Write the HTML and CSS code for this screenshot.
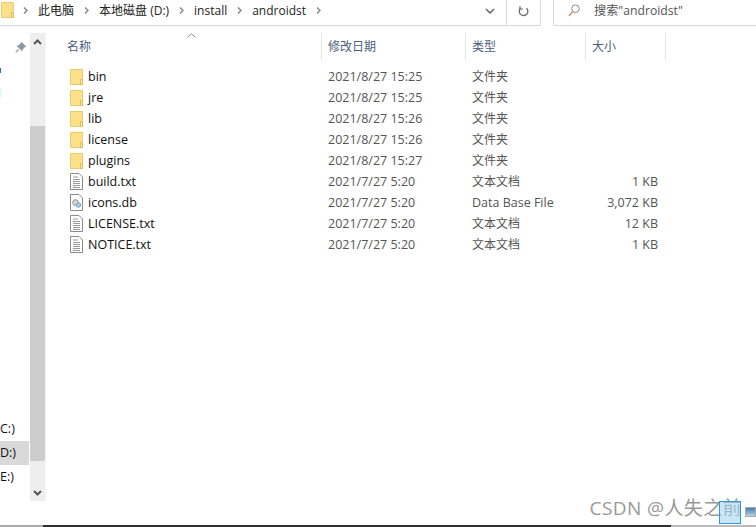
FILE: index.html
```html
<!DOCTYPE html>
<html lang="zh">
<head>
<meta charset="utf-8">
<title>androidst</title>
<link rel="stylesheet" href="styles.css">
</head>
<body>
<svg class="defs" width="0" height="0" aria-hidden="true">
  <symbol id="folder" viewBox="0 0 13 16">
    <path d="M.5.5H12.500V15.500H.5Z" fill="#fde08a" stroke="#eccb6a"/>
    <path d="M10.500 10.500H12.500V15.500H10.500Z" fill="#fdeeb5" stroke="#e3bb52"/>
  </symbol>
  <symbol id="txt" viewBox="0 0 13 17">
    <path d="M.5.5H9L12.500 4V16.500H.5Z" fill="#fff" stroke="#8a8a8a"/>
    <path d="M3 4H8M3 6.500H10M3 8.500H10M3 10.500H10M3 12.500H10M3 14.500H10" stroke="#9a9a9a"/>
  </symbol>
  <symbol id="db" viewBox="0 0 13 17">
    <path d="M.5.5H9L12.500 4V16.500H.5Z" fill="#fff" stroke="#8a8a8a"/>
    <circle cx="5.500" cy="8.500" r="2.800" fill="#d8d8d8" stroke="#8f8f8f"/>
    <circle cx="8.500" cy="11" r="2.200" fill="#a9cfe8" stroke="#7ba6c4"/>
  </symbol>
</svg>

<header class="topbar">
  <div class="address">
    <svg class="crumb-folder" width="13" height="16"><use href="#folder"/></svg>
    <span class="sep first"><svg width="5" height="7" viewBox="0 0 5 7"><path d="M1 .5L4 3.500L1 6.500" fill="none" stroke="#8a8a8a" stroke-width="1.500"/></svg></span>
    <span class="crumb">此电脑</span>
    <span class="sep"><svg width="5" height="7" viewBox="0 0 5 7"><path d="M1 .5L4 3.500L1 6.500" fill="none" stroke="#8a8a8a" stroke-width="1.500"/></svg></span>
    <span class="crumb">本地磁盘 (D:)</span>
    <span class="sep"><svg width="5" height="7" viewBox="0 0 5 7"><path d="M1 .5L4 3.500L1 6.500" fill="none" stroke="#8a8a8a" stroke-width="1.500"/></svg></span>
    <span class="crumb">install</span>
    <span class="sep"><svg width="5" height="7" viewBox="0 0 5 7"><path d="M1 .5L4 3.500L1 6.500" fill="none" stroke="#8a8a8a" stroke-width="1.500"/></svg></span>
    <span class="crumb">androidst</span>
    <span class="sep"><svg width="5" height="7" viewBox="0 0 5 7"><path d="M1 .5L4 3.500L1 6.500" fill="none" stroke="#8a8a8a" stroke-width="1.500"/></svg></span>
    <span class="drop"><svg width="10" height="6" viewBox="0 0 10 6"><path d="M1 1L5 5L9 1" fill="none" stroke="#666" stroke-width="1.500"/></svg></span>
    <span class="refresh"><svg width="11" height="12" viewBox="0 0 11 12"><path d="M8.500 3.200A4.300 4.300 0 1 1 2.500 3.300" fill="none" stroke="#6d6d6d" stroke-width="1.300"/><path d="M2 1V4H5" fill="none" stroke="#6d6d6d" stroke-width="1.200"/></svg></span>
  </div>
  <div class="search">
    <svg width="12" height="13" viewBox="0 0 12 13"><circle cx="7.500" cy="4.700" r="3.800" fill="none" stroke="#8a8a8a"/><path d="M4.700 7.500L1 12" stroke="#c08a60" stroke-width="1.200"/></svg>
    <span>搜索"androidst"</span>
  </div>
</header>

<main class="body">
  <aside class="nav">
    <div class="nav-list">
      <div class="pin"><svg width="12" height="12" viewBox="0 0 12 12"><path d="M6.500.8L11.200 5.500L9.800 6.200L7.500 8.800L7.200 10.500L1.500 4.800L3.300 4.500L5.800 2.200Z" fill="#8d99a6"/><path d="M3.500 8.500L.8 11.200" stroke="#8d99a6" stroke-width="1.200"/></svg></div>
      <div class="marks"><i class="mark-a"></i><i class="mark-b"></i></div>
      <div class="drives">
        <div class="drive">C:)</div>
        <div class="drive active">D:)</div>
        <div class="drive">E:)</div>
      </div>
    </div>
    <div class="scroll">
      <div class="arrow"><svg width="9" height="6" viewBox="0 0 9 6"><path d="M1 5L4.500 1.500L8 5" fill="none" stroke="#555" stroke-width="2"/></svg></div>
      <div class="track"><div class="thumb"></div></div>
      <div class="arrow"><svg width="9" height="6" viewBox="0 0 9 6"><path d="M1 1L4.500 4.500L8 1" fill="none" stroke="#555" stroke-width="2"/></svg></div>
    </div>
  </aside>

  <section class="files">
    <div class="head">
      <div class="col col-name">名称<svg class="sort" width="9" height="5" viewBox="0 0 9 5"><path d="M.5 4.500L4.500 .8L8.500 4.500" fill="none" stroke="#8a8a8a"/></svg></div>
      <div class="col col-date">修改日期</div>
      <div class="col col-type">类型</div>
      <div class="col col-size">大小</div>
    </div>
    <div class="rows">
      <div class="row"><div class="name"><svg width="13" height="16"><use href="#folder"/></svg>bin</div><div class="date">2021/8/27 15:25</div><div class="type">文件夹</div><div class="size"></div></div>
      <div class="row"><div class="name"><svg width="13" height="16"><use href="#folder"/></svg>jre</div><div class="date">2021/8/27 15:25</div><div class="type">文件夹</div><div class="size"></div></div>
      <div class="row"><div class="name"><svg width="13" height="16"><use href="#folder"/></svg>lib</div><div class="date">2021/8/27 15:26</div><div class="type">文件夹</div><div class="size"></div></div>
      <div class="row"><div class="name"><svg width="13" height="16"><use href="#folder"/></svg>license</div><div class="date">2021/8/27 15:26</div><div class="type">文件夹</div><div class="size"></div></div>
      <div class="row"><div class="name"><svg width="13" height="16"><use href="#folder"/></svg>plugins</div><div class="date">2021/8/27 15:27</div><div class="type">文件夹</div><div class="size"></div></div>
      <div class="row"><div class="name"><svg width="13" height="17"><use href="#txt"/></svg>build.txt</div><div class="date">2021/7/27 5:20</div><div class="type">文本文档</div><div class="size">1 KB</div></div>
      <div class="row"><div class="name"><svg width="13" height="17"><use href="#db"/></svg>icons.db</div><div class="date">2021/7/27 5:20</div><div class="type latin">Data Base File</div><div class="size">3,072 KB</div></div>
      <div class="row"><div class="name"><svg width="13" height="17"><use href="#txt"/></svg>LICENSE.txt</div><div class="date">2021/7/27 5:20</div><div class="type">文本文档</div><div class="size">12 KB</div></div>
      <div class="row"><div class="name"><svg width="13" height="17"><use href="#txt"/></svg>NOTICE.txt</div><div class="date">2021/7/27 5:20</div><div class="type">文本文档</div><div class="size">1 KB</div></div>
    </div>
  </section>
</main>

<div class="watermark">CSDN @人失之前</div>
<div class="tray-a"></div>
<div class="tray-b"></div>
<footer class="strip"><i class="s1"></i><i class="s2"></i><i class="s3"></i></footer>
</body>
</html>
```
FILE: styles.css
```css
* { box-sizing: border-box; }
html, body { margin: 0; height: 100%; }
body {
  width: 756px;
  height: 527px;
  overflow: hidden;
  position: relative;
  display: flex;
  flex-direction: column;
  background: #fff;
  font: 12px/21px "Open Sans", "Noto Sans CJK SC", sans-serif;
  color: #111;
}
.defs { position: absolute; }
svg { display: block; flex: none; }

.topbar { height: 26px; display: flex; flex: none; }
.address {
  width: 541px;
  display: flex;
  align-items: center;
  padding: 0 0 0 1px;
  border: solid #d9d9d9;
  border-width: 0 1px 1px 0;
  color: #222;
}
.crumb-folder { margin-bottom: 5px; }
.sep { width: 9px; margin: 0 8px 5px; display: flex; justify-content: center; }
.sep.first { margin: 0 8px 5px 7px; }
.crumb { white-space: nowrap; margin-bottom: 5px; }
.drop { margin: 0 6px 3px auto; width: 20px; display: flex; justify-content: center; }
.refresh { width: 34px; height: 25px; padding-bottom: 3px; border-left: 1px solid #d9d9d9; display: flex; align-items: center; justify-content: center; }
.search {
  margin-left: 12px;
  flex: 1;
  display: flex;
  align-items: center;
  gap: 14px;
  padding: 0 0 4px 14px;
  border: solid #d9d9d9;
  border-width: 0 0 1px 1px;
  font-size: 12.200px;
  color: #555;
}

.body { flex: 1; display: flex; min-height: 0; }
.nav { width: 47px; flex: none; display: flex; padding-top: 7px; height: 475px; }
.nav-list { width: 30px; display: flex; flex-direction: column; position: relative; }
.pin { padding: 8px 0 0 15px; height: 35px; }
.marks { height: 0; }
.mark-a { position: absolute; left: 0; top: 35px; width: 1px; height: 5px; background: #2a6fd0; }
.mark-b { position: absolute; left: 0; top: 55px; width: 1px; height: 10px; background: #d6fbff; }
.drives { margin-top: auto; padding-bottom: 12px; }
.drive { height: 24px; line-height: 24px; margin-right: 1px; white-space: nowrap; font-size: 12.500px; color: #111; }
.drive.active { background: #d9d9d9; }
.scroll {
  width: 16px;
  background: #eee;
  display: flex;
  flex-direction: column;
  border-right: 1px solid #f4f4f4;
}
.arrow { height: 17px; display: flex; align-items: center; justify-content: center; flex: none; }
.track { flex: 1; padding-top: 76px; padding-bottom: 23px; display: flex; }
.thumb { flex: 1; background: #cdcdcd; }

.files { flex: 1; min-width: 0; }
.head { display: flex; height: 28px; margin-top: 7px; }
.col { color: #4c607a; padding-left: 6px; line-height: 27px; border-right: 1px solid #e5e5e5; position: relative; }
.col-name { width: 275px; padding-left: 20px; }
.col-date { width: 144px; }
.col-type { width: 120px; }
.col-size { width: 80px; }
.sort { position: absolute; left: 140px; top: 0; }
.rows { padding-top: 5px; }
.row { display: flex; height: 21px; align-items: center; color: #555; }
.name { width: 275px; padding-left: 23px; display: flex; align-items: center; gap: 5px; color: #111; font-size: 12.500px; }
.date { width: 144px; padding-left: 6px; font-size: 12.500px; }
.type { width: 104px; padding-left: 6px; white-space: nowrap; }
.type.latin { font-size: 12.500px; }
.size { width: 88px; text-align: right; white-space: nowrap; font-size: 12.500px; }

.watermark {
  position: absolute;
  right: 14px;
  top: 495px;
  font-size: 19px;
  line-height: 26px;
  color: #999;
  letter-spacing: .4px;
}
.tray-a {
  position: absolute;
  left: 719px;
  top: 501px;
  width: 22px;
  height: 23px;
  background: rgba(160, 212, 240, .55);
  border: 1px solid #2f9bd6;
}
.tray-b {
  position: absolute;
  left: 745px;
  top: 507px;
  width: 11px;
  height: 10px;
  border: 1px solid #aaa;
  background: linear-gradient(#3f7fb0, #b8d3e6);
}
.strip { position: absolute; left: 0; right: 0; bottom: 0; height: 2px; display: flex; }
.s1 { width: 43px; background: #aaa; }
.s2 { width: 628px; background: #2f2f2f; }
.s3 { flex: 1; background: #bbb; }
```
